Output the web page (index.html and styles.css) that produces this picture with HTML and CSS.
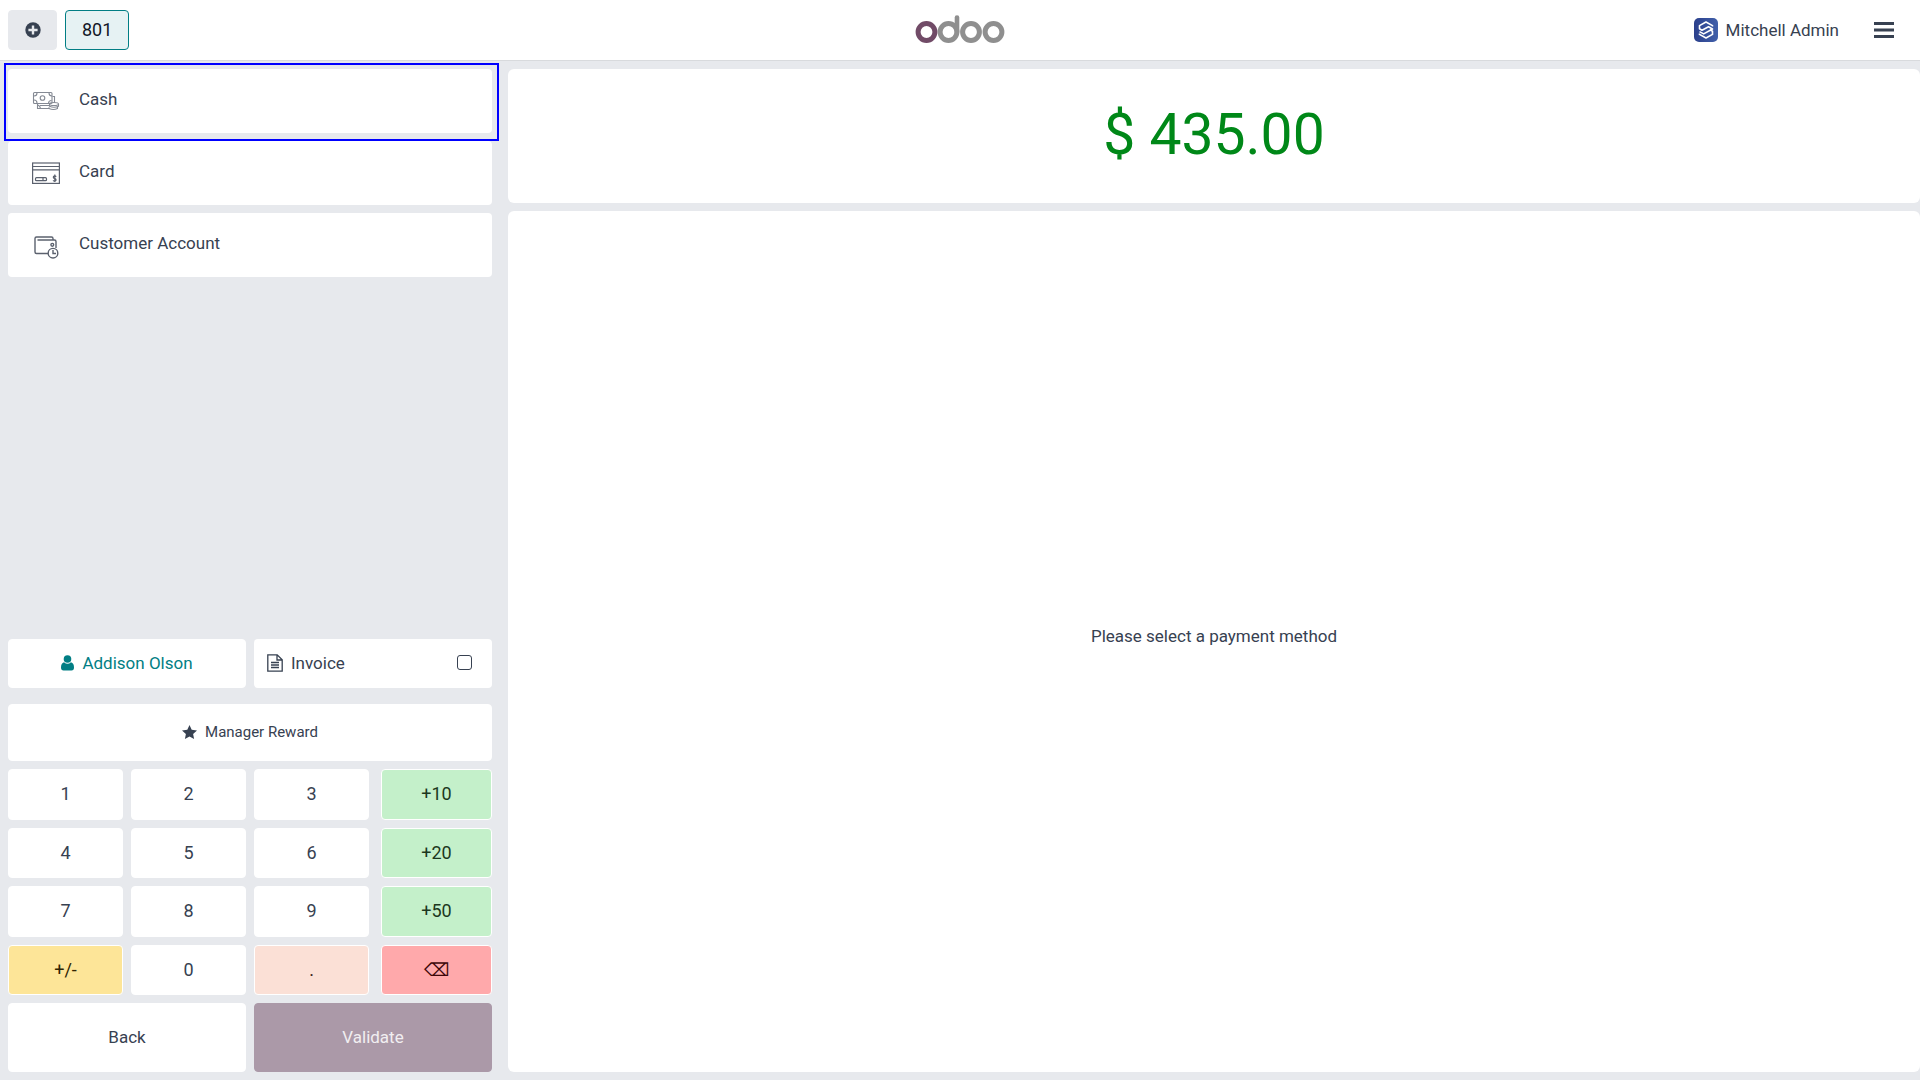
FILE: index.html
```
<!DOCTYPE html>
<html lang="en">
<head>
    <meta charset="UTF-8">
    <meta name="viewport" content="width=device-width, initial-scale=1.0">
    <title>Odoo POS</title>
    <link rel="stylesheet" href="styles.css">
</head>
<body>
    <header class="topbar">
        <div class="topbar-left">
            <button class="btn new-order" type="button" aria-label="New order">
                <svg width="16" height="16" viewBox="0 0 16 16">
                    <circle cx="8" cy="8" r="7.7" fill="#374151"/>
                    <path d="M8 3.4v9.2M3.4 8h9.2" stroke="#e7e9ed" stroke-width="2.4"/>
                </svg>
            </button>
            <button class="btn order-tab" type="button">801</button>
        </div>
        <svg class="logo" width="90" height="32" viewBox="0 0 90 32" role="img" aria-label="odoo">
            <g fill="none" stroke="#8f8f8f" stroke-width="5">
                <circle cx="33.5" cy="18" r="8.4"/>
                <path d="M42 18V3.6" stroke-width="4.6" stroke-linecap="round"/>
                <circle cx="56" cy="18" r="8.4"/>
                <circle cx="78.5" cy="18" r="8.4"/>
                <circle cx="11.5" cy="18" r="8.4" stroke="#714b67"/>
            </g>
        </svg>
        <div class="topbar-right">
            <button class="user" type="button">
                <svg width="24" height="24" viewBox="0 0 24 24">
                    <defs>
                        <linearGradient id="avatar" x1="0" y1="0" x2="1" y2="0">
                            <stop offset="0" stop-color="#2b408c"/>
                            <stop offset="1" stop-color="#4160aa"/>
                        </linearGradient>
                    </defs>
                    <rect width="24" height="24" rx="5" fill="url(#avatar)"/>
                    <g fill="none" stroke="#fff" stroke-width="1.6" stroke-linejoin="round">
                        <path d="M18.5 8.4V7.6L12 4 5.5 7.6v3.2L8 12.200l6.500-3.400 4 2.200-8.800 4.900-4.200-2.300"/>
                        <path d="M5.500 15.600v.8L12 20l6.500-3.600v-3.200L16 11.800"/>
                    </g>
                </svg>
                Mitchell Admin
            </button>
            <button class="menu" type="button" aria-label="Menu">
                <svg width="20" height="18" viewBox="0 0 20 18">
                    <path d="M0 2.5h20M0 9h20M0 15.5h20" stroke="#374151" stroke-width="3.2"/>
                </svg>
            </button>
        </div>
    </header>

    <main class="payment">
        <section class="left">
            <div class="methods">
                <button class="method selected" type="button">
                    <svg width="28" height="28" viewBox="0 0 28 28" fill="none" stroke="#858a94" stroke-width="1.1">
                        <rect x="1.5" y="5.5" width="18.5" height="11" rx="1"/>
                        <path d="M2 9q3 0 3-3M20 9q-3 0-3-3M2 13q3 0 3 3M16.5 16.5q0-3 3-3"/>
                        <circle cx="10.5" cy="11" r="2.3"/>
                        <path d="M20.5 9.5h2v6M5.5 16.5v5h12M5.5 18q2.5.5 3 3.5M8 18.5h9"/>
                        <ellipse cx="22" cy="17" rx="4.5" ry="1.5"/>
                        <path d="M17.5 17v2.2q4.5 2.2 9 0V17M17 20.200v1.3q4.5 2 8.5 0v-1.500"/>
                    </svg>
                    Cash
                </button>
                <button class="method" type="button">
                    <svg width="28" height="28" viewBox="0 0 28 28" fill="none" stroke="#5b616e" stroke-width="1.2">
                        <rect x=".6" y="4" width="26.8" height="20.4"/>
                        <path d="M1 7.5h26M1 10.8h26"/>
                        <rect x="3.5" y="18.7" width="11" height="3" rx="1"/>
                        <path d="M11 18.7v3M24.3 17.600q-1.500-1.200-2.700-.2-.8 1.500 1 2 2 .8 1.200 2.200-1.300 1.200-2.800-.2M22.800 15.500v7.500"/>
                    </svg>
                    Card
                </button>
                <button class="method" type="button">
                    <svg width="28" height="28" viewBox="0 0 28 28" fill="none" stroke="#5b616e" stroke-width="1.4">
                        <path d="M16 22.500H4.500q-1.500 0-1.500-1.500V7.500Q3 6 4.500 6h15q1.500 0 1.500 1.500V9H5.500M21 9h1.500q1.500 0 1.500 1.500V17"/>
                        <circle cx="20.3" cy="13.8" r="1.4"/>
                        <circle cx="21" cy="22.2" r="4.8"/>
                        <path d="M21 19v3.500h3"/>
                    </svg>
                    Customer Account
                </button>
            </div>

            <div class="controls">
                <div class="actions">
                    <button class="btn customer" type="button">
                        <svg width="13" height="16" viewBox="0 0 13 16" fill="#017e84">
                            <circle cx="6.5" cy="4" r="3.8"/>
                            <path d="M3 7.2Q0 8 0 12.500 0 15.500 2.500 15.500h8q2.500 0 2.500-3Q13 8 10 7.200 6.500 10.200 3 7.200z"/>
                        </svg>
                        Addison Olson
                    </button>
                    <label class="invoice">
                        <svg width="16" height="18" viewBox="0 0 16 18" fill="none" stroke="#374151" stroke-width="1.3">
                            <path d="M.8.8h9.400l5 5v11.400H.8zM10 .8v5.200h5"/>
                            <path d="M4 8.500h8M4 11h8M4 13.500h8"/>
                        </svg>
                        Invoice
                        <input type="checkbox">
                    </label>
                </div>
                <button class="btn reward" type="button">
                    <svg width="15" height="14" viewBox="0 0 15 14" fill="#374151">
                        <path d="M7.500 0l2.200 4.700 5.300.700-3.900 3.500 1 5.100-4.600-2.500L2.900 14l1-5.100L0 5.400l5.300-.7z"/>
                    </svg>
                    Manager Reward
                </button>
                <div class="numpad">
                    <div class="keys">
                        <button class="btn key" type="button">1</button>
                        <button class="btn key" type="button">2</button>
                        <button class="btn key" type="button">3</button>
                        <button class="btn key" type="button">4</button>
                        <button class="btn key" type="button">5</button>
                        <button class="btn key" type="button">6</button>
                        <button class="btn key" type="button">7</button>
                        <button class="btn key" type="button">8</button>
                        <button class="btn key" type="button">9</button>
                        <button class="btn key yellow" type="button">+/-</button>
                        <button class="btn key" type="button">0</button>
                        <button class="btn key peach" type="button">.</button>
                    </div>
                    <div class="extra">
                        <button class="btn key green" type="button">+10</button>
                        <button class="btn key green" type="button">+20</button>
                        <button class="btn key green" type="button">+50</button>
                        <button class="btn key red" type="button">⌫</button>
                    </div>
                </div>
                <div class="actions">
                    <button class="btn big" type="button">Back</button>
                    <button class="btn big validate" type="button">Validate</button>
                </div>
            </div>
        </section>

        <section class="right">
            <div class="total">$ 435.00</div>
            <div class="message">Please select a payment method</div>
        </section>
    </main>
</body>
</html>
```
FILE: styles.css
```
* {
    box-sizing: border-box;
}

body {
    margin: 0;
    height: 100vh;
    display: flex;
    flex-direction: column;
    font-family: Roboto, sans-serif;
    font-size: 17px;
    color: #374151;
    background: #e7e9ed;
}

button {
    font: inherit;
    color: inherit;
    border: none;
    background: none;
    padding: 0;
    cursor: pointer;
}

.btn {
    display: flex;
    align-items: center;
    justify-content: center;
    padding-bottom: 1px;
    background: #fff;
    border: 1px solid #fff;
    border-radius: 4px;
}

/* Top bar */
.topbar {
    display: grid;
    grid-template-columns: 1fr auto 1fr;
    align-items: center;
    height: 61px;
    padding-bottom: 1px;
    background: #fff;
    border-bottom: 1px solid #d8dadd;
}

.topbar-left {
    display: flex;
    gap: 8px;
    padding-left: 8px;
}

.topbar-left .btn {
    height: 40px;
    padding: 0 16px;
}

.topbar-left .new-order {
    width: 49px;
    padding: 0;
    background: #e7e9ed;
    border-color: #e7e9ed;
}

.topbar-left .order-tab {
    background: #e6f2f3;
    border-color: #017e84;
    color: #111827;
    font-size: 18px;
}

.topbar-right {
    display: flex;
    justify-content: flex-end;
    align-items: center;
    gap: 35px;
    padding-right: 26px;
}

.user {
    display: flex;
    align-items: center;
    gap: 8px;
}

.menu {
    display: flex;
}

/* Payment screen */
.payment {
    flex: 1;
    display: flex;
    min-height: 0;
}

.left {
    flex: 0 0 500px;
    display: flex;
    flex-direction: column;
    justify-content: space-between;
    padding: 8px;
}

.methods {
    display: flex;
    flex-direction: column;
    gap: 8px;
}

.method {
    position: relative;
    display: flex;
    align-items: center;
    gap: 19px;
    height: 64px;
    padding: 0 24px 4px;
    background: #fff;
    border-radius: 4px;
}

.method svg {
    margin-top: 4px;
}

.method.selected::after {
    content: "";
    position: absolute;
    inset: -6px -7px -8px -4px;
    border: 2px solid #0000ff;
    z-index: 1;
}

.controls {
    display: flex;
    flex-direction: column;
    gap: 8px;
}

.actions {
    display: grid;
    grid-template-columns: 1fr 1fr;
    gap: 8px;
}

.customer {
    height: 49px;
    gap: 8px;
    color: #017e84;
}

.invoice {
    display: flex;
    align-items: center;
    gap: 8px;
    padding: 0 20px 2px 13px;
    background: #fff;
    border-radius: 4px;
}

.invoice input {
    appearance: none;
    width: 15px;
    height: 15px;
    margin: 0 0 0 auto;
    border: 1px solid #374151;
    border-radius: 3px;
}

.reward {
    height: 57px;
    margin-top: 8px;
    padding-bottom: 2px;
    gap: 8px;
    font-size: 15px;
}

/* Number pad */
.numpad {
    display: flex;
    gap: 12px;
    height: 226px;
}

.keys {
    flex: 1;
    display: grid;
    grid-template-columns: repeat(3, 1fr);
    grid-auto-rows: 1fr;
    gap: 8px;
}

.extra {
    flex: 0 0 111px;
    display: grid;
    grid-auto-rows: 1fr;
    gap: 8px;
}

.key {
    font-size: 18px;
}

.yellow {
    background: #fde598;
    color: #302402;
}

.peach {
    background: #fbe0d6;
    color: #40241c;
}

.green {
    background: #c4f0ca;
    color: #1c3820;
}

.red {
    background: #ffa9ab;
    color: #3d0709;
}

.big {
    height: 69px;
    padding-bottom: 2px;
}

.validate {
    background: #ab99a8;
    border-color: #ab99a8;
    color: #f1eef1;
}

.right {
    flex: 1;
    display: flex;
    flex-direction: column;
    gap: 8px;
    padding: 8px 0 8px 8px;
}

.total,
.message {
    display: flex;
    align-items: center;
    justify-content: center;
    background: #fff;
    border-radius: 6px;
}

.total {
    height: 134px;
    padding-bottom: 4px;
    color: #008818;
    font-size: 57px;
}

.message {
    flex: 1;
    padding-bottom: 12px;
}
```
